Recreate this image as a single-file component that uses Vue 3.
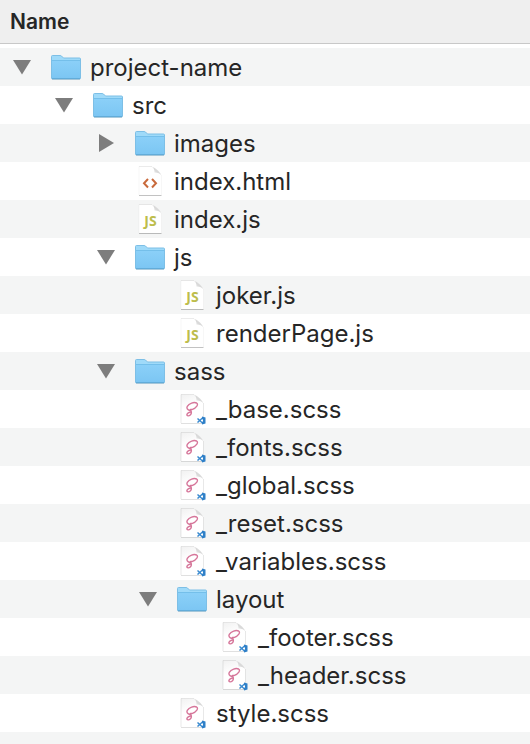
<script setup>
import { computed, ref } from 'vue'

const tree = ref([
  {
    name: 'project-name', type: 'folder', open: true, children: [
      {
        name: 'src', type: 'folder', open: true, children: [
          { name: 'images', type: 'folder', open: false, children: [] },
          { name: 'index.html', type: 'html' },
          { name: 'index.js', type: 'js' },
          {
            name: 'js', type: 'folder', open: true, children: [
              { name: 'joker.js', type: 'js' },
              { name: 'renderPage.js', type: 'js' },
            ],
          },
          {
            name: 'sass', type: 'folder', open: true, children: [
              { name: '_base.scss', type: 'scss' },
              { name: '_fonts.scss', type: 'scss' },
              { name: '_global.scss', type: 'scss' },
              { name: '_reset.scss', type: 'scss' },
              { name: '_variables.scss', type: 'scss' },
              {
                name: 'layout', type: 'folder', open: true, children: [
                  { name: '_footer.scss', type: 'scss' },
                  { name: '_header.scss', type: 'scss' },
                ],
              },
              { name: 'style.scss', type: 'scss' },
            ],
          },
        ],
      },
    ],
  },
])

function flatten(nodes, depth = 0) {
  return nodes.flatMap((node) => [
    { node, depth },
    ...(node.open ? flatten(node.children, depth + 1) : []),
  ])
}

const rows = computed(() => flatten(tree.value))
</script>

<template>
  <svg class="defs" aria-hidden="true">
    <defs>
      <linearGradient id="folder-front" x1="0" y1="0" x2="0" y2="1">
        <stop offset="0" stop-color="#8bd0f8" />
        <stop offset="1" stop-color="#7cc6f3" />
      </linearGradient>
      <linearGradient id="page-fold" x1="0" y1="1" x2="1" y2="0">
        <stop offset="0" stop-color="#ffffff" />
        <stop offset="0.5" stop-color="#d8d8d8" />
        <stop offset="1" stop-color="#f4f4f4" />
      </linearGradient>
      <linearGradient id="page-sheen" x1="0" y1="0" x2="0.3" y2="1">
        <stop offset="0" stop-color="#f1f1f1" />
        <stop offset="0.5" stop-color="#ffffff" />
      </linearGradient>
    </defs>
  </svg>
  <table class="files">
    <thead>
      <tr>
        <th scope="col">Name</th>
      </tr>
    </thead>
    <tbody>
      <tr v-for="{ node, depth } in rows" :key="node.name">
        <td>
          <div class="entry" :style="{ '--depth': depth }">
            <button
              v-if="node.type === 'folder'"
              type="button"
              class="toggle"
              :aria-expanded="node.open"
              :aria-label="node.name"
              @click="node.open = !node.open"
            >
              <svg viewBox="0 0 18 18">
                <path v-if="node.open" d="M0 2H18L9 16.500Z" />
                <path v-else d="M2 0V18L17 9Z" />
              </svg>
            </button>
            <span v-else class="toggle"></span>

            <svg class="icon" viewBox="0 0 30 38" aria-hidden="true">
              <template v-if="node.type === 'folder'">
                <path d="M1 31.500H29" stroke="#000" stroke-opacity=".16" />
                <path d="M0.500 30V8.500Q0.500 7.500 1.500 7.500H9Q10 7.500 10.500 8L12.500 10H28.500Q29.500 10 29.500 11V30Q29.500 31 28.500 31H1.500Q0.500 31 0.500 30Z" fill="#9fdaf9" stroke="#7dbfe6" />
                <path d="M1 12.500H29V30H1Z" fill="url(#folder-front)" />
                <path d="M1 12.500H29" stroke="#74bfea" />
                <path d="M1 30.500H29" stroke="#62acd9" />
              </template>
              <template v-else>
                <path d="M4 4.500H17Q20 5.500 26.500 13V33H4Z" :fill="node.type === 'scss' ? 'url(#page-sheen)' : '#fff'" />
                <path d="M4 33V4.500M26.500 13V33" fill="none" stroke="#000" :stroke-opacity="node.type === 'scss' ? 0.09 : 0.03" />
                <path d="M4 4.500H17" stroke="#000" stroke-opacity=".08" />
                <path d="M16.500 4.500Q19.500 6 19.500 10.500Q24.500 10.500 26.500 13.500Q25.500 11 23 8.500Q20 5.500 16.500 4.500Z" fill="url(#page-fold)" />
                <path d="M4 33.500H26.500" stroke="#000" :stroke-opacity="node.type === 'scss' ? 0.12 : 0.24" />

                <path v-if="node.type === 'html'" d="M13 17L9 21.300L13 25.500M17 17L21 21.300L17 25.500" fill="none" stroke="#c96a3c" stroke-width="2" />
                <text v-else-if="node.type === 'js'" class="js" x="15.500" y="26" text-anchor="middle">JS</text>
                <template v-else>
                  <path d="M13 20.500C10.500 20 9.200 18.300 10.300 16.300C12 13.300 17 11.700 19.600 13C21.900 14.400 19.300 18 15.500 19.300C14.600 19.600 13.900 19.600 13.400 19.400M13.500 20.300C14.700 21.500 14.700 23.700 13.300 25C12 26.200 9.700 26.200 9.900 24.700C10.100 23.300 12.300 22.300 14 21.900" fill="none" stroke="#d6769a" stroke-width="1.400" stroke-linecap="round" />
                  <path d="M26 27.500L20.500 32.500M20.500 28.500L26 33.500" stroke="#3b8bd0" stroke-width="1.500" />
                  <path d="M25 26.500L28.500 27.500V33.500L25 34.500Z" fill="#2f80c8" />
                  <path d="M26 29V32L24 30.500Z" fill="#fff" />
                </template>
              </template>
            </svg>
            <span class="name">{{ node.name }}</span>
          </div>
        </td>
      </tr>
    </tbody>
  </table>
</template>

<style>
body {
  margin: 0;
  min-height: 100vh;
  overflow: hidden;
  background: #f4f5f5;
}
</style>

<style scoped>
.defs {
  position: absolute;
  width: 0;
  height: 0;
}

.files {
  width: 100%;
  border-collapse: separate;
  border-spacing: 0;
  background: #fff;
  color: #262626;
  font-family: Inter, "Liberation Sans", sans-serif;
}

th {
  height: 43px;
  padding: 0 10px;
  border-bottom: 1px solid #c8c8c8;
  background: #efefef;
  font-size: 21px;
  font-weight: 600;
  line-height: 24px;
  text-align: left;
}

tbody::before {
  content: "";
  display: block;
  height: 4px;
}

td {
  padding: 0;
}

tbody tr:nth-child(odd) {
  background: #f4f5f5;
}

.entry {
  display: flex;
  align-items: center;
  height: 38px;
  padding-left: calc(13px + var(--depth) * 42px);
}

.toggle {
  flex: none;
  width: 18px;
  height: 18px;
  margin-right: 20px;
  padding: 0;
  border: 0;
  background: none;
}

.toggle svg {
  display: block;
  width: 18px;
  height: 18px;
  fill: #7d7d7d;
}

.icon {
  flex: none;
  width: 30px;
  height: 38px;
  margin-right: 9px;
}

.js {
  fill: #bdbd4c;
  font: 700 14px "Open Sans", sans-serif;
}

.name {
  padding-top: 2px;
  font-size: 24px;
  line-height: 36px;
  white-space: nowrap;
}
</style>
